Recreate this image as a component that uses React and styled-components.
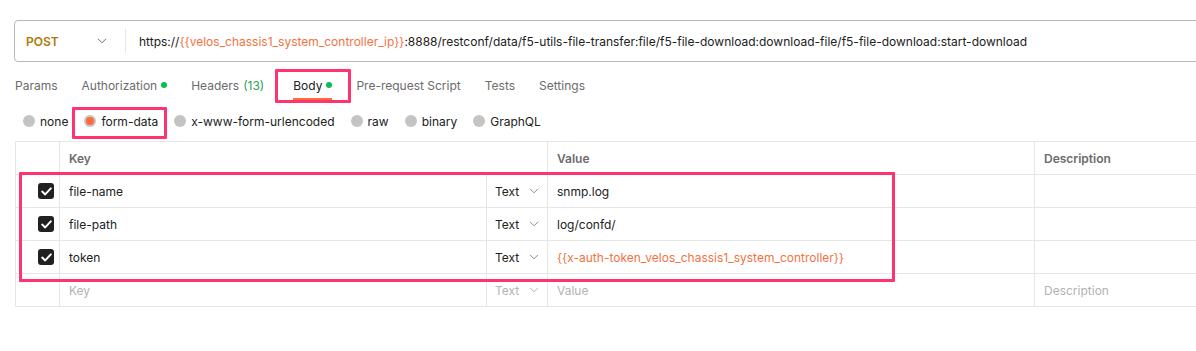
import React from 'react';
import styled, { createGlobalStyle } from 'styled-components';

const GlobalStyle = createGlobalStyle`
  body {
    margin: 0;
    background: #ffffff;
    font-family: Inter, "Noto Sans", "Liberation Sans", sans-serif;
    color: #212121;
    overflow: hidden;
  }
`;

const Page = styled.div`
  width: 1196px;
  padding-top: 20px;
  box-sizing: border-box;
`;

const UrlBar = styled.div`
  display: flex;
  align-items: center;
  height: 42px;
  width: 1220px;
  margin-left: 14px;
  box-sizing: border-box;
  border: 1px solid #b8b8b8;
  border-radius: 4px;
`;

const MethodSelect = styled.div`
  display: flex;
  align-items: center;
  justify-content: space-between;
  width: 110px;
  box-sizing: border-box;
  padding: 0 18px 0 11px;
  font-size: 12px;
  font-weight: 600;
  color: #ad7a03;
`;

const Divider = styled.div`
  width: 1px;
  height: 24px;
  background: #e6e6e6;
`;

const UrlText = styled.div`
  padding-left: 13px;
  font-size: 12px;
  color: #212121;
  white-space: nowrap;
`;

const Variable = styled.span`
  color: #f3733f;
`;

const Tabs = styled.div`
  display: flex;
  align-items: stretch;
  gap: 24px;
  height: 33px;
  margin-top: 7px;
  padding-left: 15px;
`;

const Tab = styled.div`
  position: relative;
  display: flex;
  align-items: center;
  gap: 4px;
  padding-bottom: 1px;
  font-size: 12px;
  color: ${({ active }) => (active ? '#212121' : '#6b6b6b')};
  ${({ active }) =>
    active &&
    `
    margin-left: 5px;
    &::before {
      content: '';
      position: absolute;
      left: 0;
      right: 0;
      bottom: 2px;
      height: 2px;
      background: #ff6c37;
    }
  `}
`;

const Count = styled.span`
  color: #26a158;
`;

const Dot = styled.span`
  width: 6px;
  height: 6px;
  border-radius: 50%;
  background: #0cbb52;
`;

const Highlight = styled.div`
  position: absolute;
  top: ${({ top }) => top}px;
  left: ${({ left }) => left}px;
  right: ${({ right }) => right}px;
  bottom: ${({ bottom }) => bottom}px;
  border: 3px solid #ff3370;
  border-radius: 1px;
  pointer-events: none;
`;

const RadioRow = styled.div`
  display: flex;
  align-items: center;
  gap: 16px;
  height: 38px;
  padding-left: 23px;
`;

const RadioItem = styled.label`
  position: relative;
  display: flex;
  align-items: center;
  gap: 5px;
  height: 20px;
  font-size: 12px;
  color: #212121;
`;

const RadioCircle = styled.span`
  display: flex;
  align-items: center;
  justify-content: center;
  width: 12px;
  height: 12px;
  border-radius: 50%;
  background: #c4c4c4;

  &::after {
    content: '';
    display: ${({ checked }) => (checked ? 'block' : 'none')};
    width: 8px;
    height: 8px;
    border-radius: 50%;
    background: #ff6c37;
  }
`;

const Table = styled.div`
  position: relative;
  width: 1220px;
  margin: 1px 0 0 15px;
  border-top: 1px solid #e6e6e6;
  border-left: 1px solid #e6e6e6;
`;

const Row = styled.div`
  display: grid;
  grid-template-columns: 44px 427px 61px 487px 1fr;
  height: 33px;
  box-sizing: border-box;
  border-bottom: 1px solid #e6e6e6;
`;

const Cell = styled.div`
  display: flex;
  align-items: center;
  justify-content: ${({ end }) => (end ? 'flex-end' : 'flex-start')};
  grid-column: span ${({ span }) => span || 1};
  padding: ${({ end }) => (end ? '0 5px 0 0' : '0 0 0 9px')};
  border-right: 1px solid #e6e6e6;
  font-size: 12px;
  font-weight: ${({ head }) => (head ? 600 : 400)};
  color: ${({ head, muted, variable }) =>
    head ? '#6b6b6b' : muted ? '#b3b3b3' : variable ? '#f3733f' : '#212121'};
  white-space: nowrap;
`;

const TypeCell = styled(Cell)`
  gap: 10px;
  padding-left: 8px;
`;

const Checkbox = styled.span`
  display: flex;
  align-items: center;
  justify-content: center;
  width: 16px;
  height: 16px;
  border-radius: 3px;
  background: #212121;
`;

const Chevron = ({ color = '#6b6b6b' }) => (
  <svg width="10" height="6" viewBox="0 0 10 6" fill="none">
    <path d="M1 0.8 L5 4.8 L9 0.8" stroke={color} strokeWidth="1" />
  </svg>
);

const Check = () => (
  <svg width="11" height="9" viewBox="0 0 11 9" fill="none">
    <path d="M1.2 4.6 L4.2 7.4 L9.8 1.4" stroke="#fff" strokeWidth="2" strokeLinecap="round" strokeLinejoin="round" />
  </svg>
);

const tabs = [
  { label: 'Params' },
  { label: 'Authorization', dot: true },
  { label: 'Headers', count: '(13)' },
  { label: 'Body', dot: true, active: true },
  { label: 'Pre-request Script' },
  { label: 'Tests' },
  { label: 'Settings' }
];

const bodyTypes = ['none', 'form-data', 'x-www-form-urlencoded', 'raw', 'binary', 'GraphQL'];

const params = [
  { key: 'file-name', value: 'snmp.log' },
  { key: 'file-path', value: 'log/confd/' },
  { key: 'token', value: '{{x-auth-token_velos_chassis1_system_controller}}', variable: true }
];

export default function App() {
  return (
    <Page>
      <GlobalStyle />
      <UrlBar>
        <MethodSelect>
          POST
          <Chevron />
        </MethodSelect>
        <Divider />
        <UrlText>
          https://<Variable>{'{{velos_chassis1_system_controller_ip}}'}</Variable>
          :8888/restconf/data/f5-utils-file-transfer:file/f5-file-download:download-file/f5-file-download:start-download
        </UrlText>
      </UrlBar>

      <Tabs>
        {tabs.map((t) => (
          <Tab key={t.label} active={t.active}>
            {t.label}
            {t.count && <Count>{t.count}</Count>}
            {t.dot && <Dot />}
            {t.active && <Highlight top={0} left={-18} right={-19} bottom={-1} />}
          </Tab>
        ))}
      </Tabs>

      <RadioRow>
        {bodyTypes.map((type) => (
          <RadioItem key={type}>
            <RadioCircle checked={type === 'form-data'} />
            {type}
            {type === 'form-data' && <Highlight top={-4} left={-12} right={-9} bottom={-8} />}
          </RadioItem>
        ))}
      </RadioRow>

      <Table>
        <Row>
          <Cell />
          <Cell head span={2}>Key</Cell>
          <Cell head>Value</Cell>
          <Cell head>Description</Cell>
        </Row>
        {params.map((p) => (
          <Row key={p.key}>
            <Cell end>
              <Checkbox>
                <Check />
              </Checkbox>
            </Cell>
            <Cell>{p.key}</Cell>
            <TypeCell>
              Text
              <Chevron color="#8a8a8a" />
            </TypeCell>
            <Cell variable={p.variable}>{p.value}</Cell>
            <Cell />
          </Row>
        ))}
        <Row>
          <Cell />
          <Cell muted>Key</Cell>
          <TypeCell muted>
            Text
            <Chevron color="#b3b3b3" />
          </TypeCell>
          <Cell muted>Value</Cell>
          <Cell muted>Description</Cell>
        </Row>
        <Highlight top={30} left={3} right={341} bottom={25} />
      </Table>
    </Page>
  );
}
